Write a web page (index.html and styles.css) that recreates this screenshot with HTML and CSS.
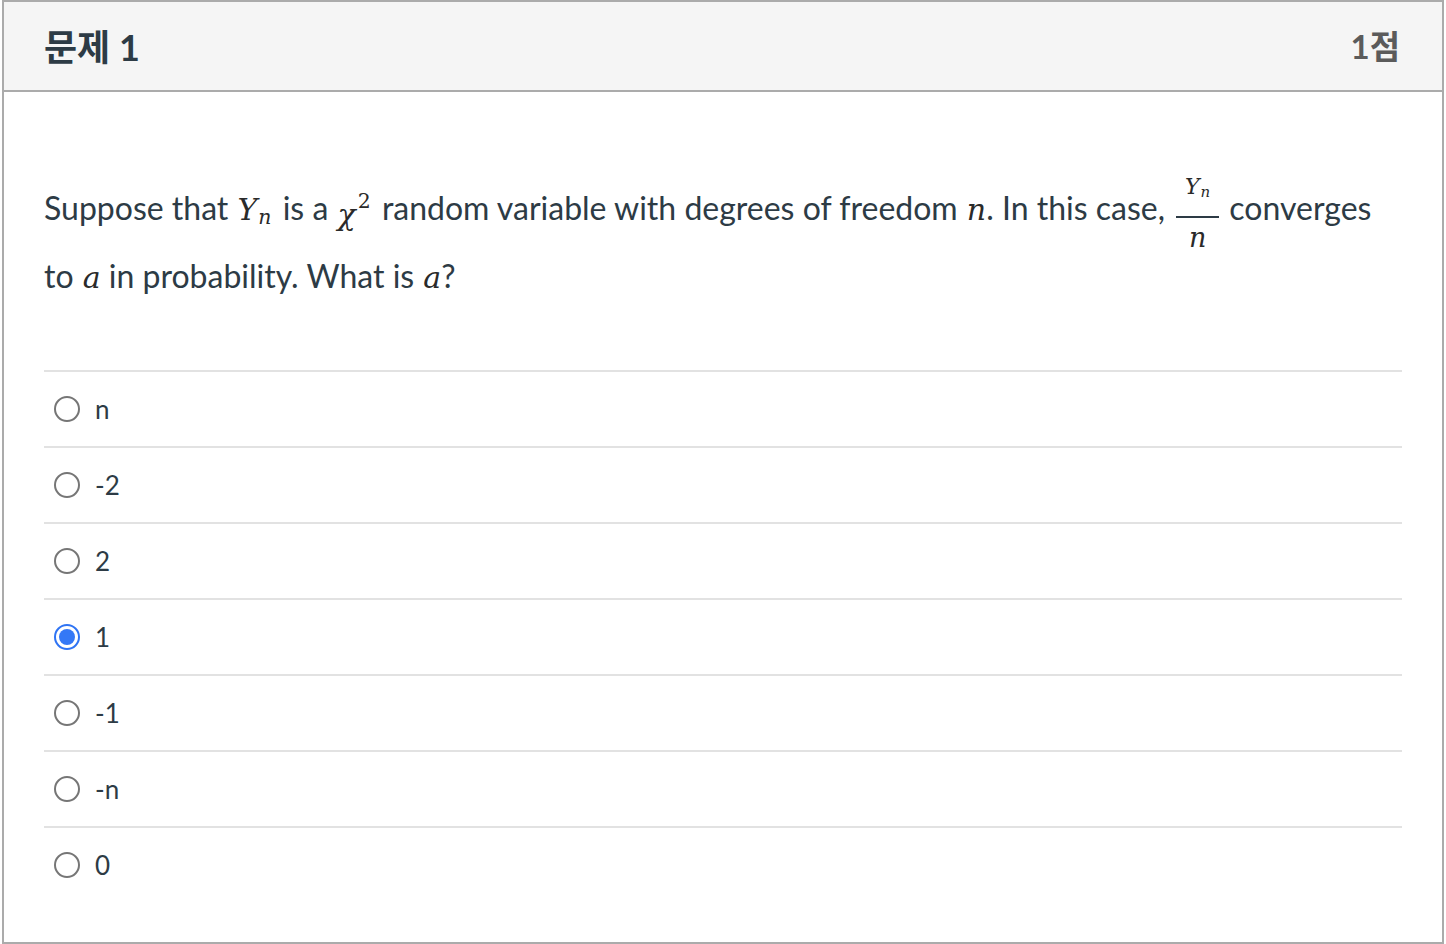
FILE: index.html
```html
<!DOCTYPE html>
<html lang="ko">
<head>
<meta charset="utf-8">
<title>문제 1</title>
<link rel="stylesheet" href="styles.css">
</head>
<body>
<div class="question">
  <div class="q-header">
    <span class="q-title">문제 1</span>
    <span class="q-points">1점</span>
  </div>
  <div class="q-body">
    <p class="q-text">Suppose that <span class="m"><i>Y</i><sub>n</sub></span> is a <span class="m"><i class="chi">χ</i><sup>2</sup></span> random variable with degrees of freedom <span class="m tight"><i>n</i></span>. In this case, <span class="frac"><span class="num"><i>Y</i><sub>n</sub></span><span class="den"><i>n</i></span></span> converges to <span class="m tight"><i>a</i></span> in probability. What is <span class="m tight"><i>a</i></span>?</p>
    <div class="answers">
      <label class="answer"><span class="radio"></span><span class="a-text">n</span></label>
      <label class="answer"><span class="radio"></span><span class="a-text">-2</span></label>
      <label class="answer"><span class="radio"></span><span class="a-text">2</span></label>
      <label class="answer"><span class="radio checked"></span><span class="a-text">1</span></label>
      <label class="answer"><span class="radio"></span><span class="a-text">-1</span></label>
      <label class="answer"><span class="radio"></span><span class="a-text">-n</span></label>
      <label class="answer last"><span class="radio"></span><span class="a-text">0</span></label>
    </div>
  </div>
</div>
</body>
</html>
```
FILE: styles.css
```css
html, body {
  margin: 0;
  padding: 0;
  background: #fff;
}
body {
  font-family: Lato, "Noto Sans CJK KR", sans-serif;
  color: #2d3b45;
}
.question {
  margin: 0 2px;
  border: 2px solid #ababab;
  box-sizing: border-box;
  height: 944px;
  display: flex;
  flex-direction: column;
}
.q-header {
  height: 90px;
  flex: none;
  box-sizing: border-box;
  background: #f5f5f5;
  border-bottom: 2px solid #ababab;
  display: flex;
  align-items: center;
  justify-content: space-between;
  padding: 0 42px 3px 40px;
}
.q-title {
  font-weight: 700;
  font-size: 36px;
  color: #2d3b45;
}
.q-points {
  font-weight: 700;
  font-size: 33px;
  color: #5b5b5b;
}
.q-body {
  padding: 0 40px;
}
.q-text {
  margin: 82px 0 0 0;
  font-size: 32px;
  line-height: 1.5;
}
.m {
  font-family: "DejaVu Serif", serif;
  font-size: 30px;
  white-space: nowrap;
  color: #2a2a2a;
  margin: 0 3px 0 1px;
}
.m.tight {
  margin: 0 0 0 1px;
}
.m i, .frac i {
  font-style: italic;
  font-weight: 400;
}
.m .chi {
  position: relative;
  top: 5px;
}
.m sub, .frac sub {
  font-family: "DejaVu Serif", serif;
  font-style: italic;
  font-size: 0.68em;
  vertical-align: -0.2em;
  line-height: 0;
  margin-left: 1px;
}
.m sup {
  font-size: 0.68em;
  vertical-align: 0.6em;
  line-height: 0;
  margin-left: 2px;
}
.frac {
  display: inline-flex;
  flex-direction: column;
  align-items: center;
  vertical-align: 26px;
  font-family: "DejaVu Serif", serif;
  color: #2a2a2a;
  margin: 0 2px 0 3px;
}
.frac .num {
  font-size: 22px;
  line-height: 25px;
  border-bottom: 2px solid #2d3b45;
  padding: 0 4px 17px;
  min-width: 35px;
  text-align: center;
}
.frac .den {
  font-size: 27px;
  line-height: 28px;
  padding-top: 6px;
}
.answers {
  margin-top: 70px;
  border-top: 2px solid #e2e2e2;
}
.answer {
  display: flex;
  align-items: center;
  height: 74px;
  border-bottom: 2px solid #e2e2e2;
  padding-left: 10px;
}
.answer.last {
  border-bottom: none;
}
.radio {
  width: 22px;
  height: 22px;
  border: 2px solid #767676;
  border-radius: 50%;
  display: flex;
  align-items: center;
  justify-content: center;
  flex: none;
}
.radio.checked {
  border-color: #2f74f4;
}
.radio.checked::after {
  content: "";
  width: 16px;
  height: 16px;
  border-radius: 50%;
  background: #3478f6;
}
.a-text {
  margin-left: 15px;
  font-size: 26px;
}
```
